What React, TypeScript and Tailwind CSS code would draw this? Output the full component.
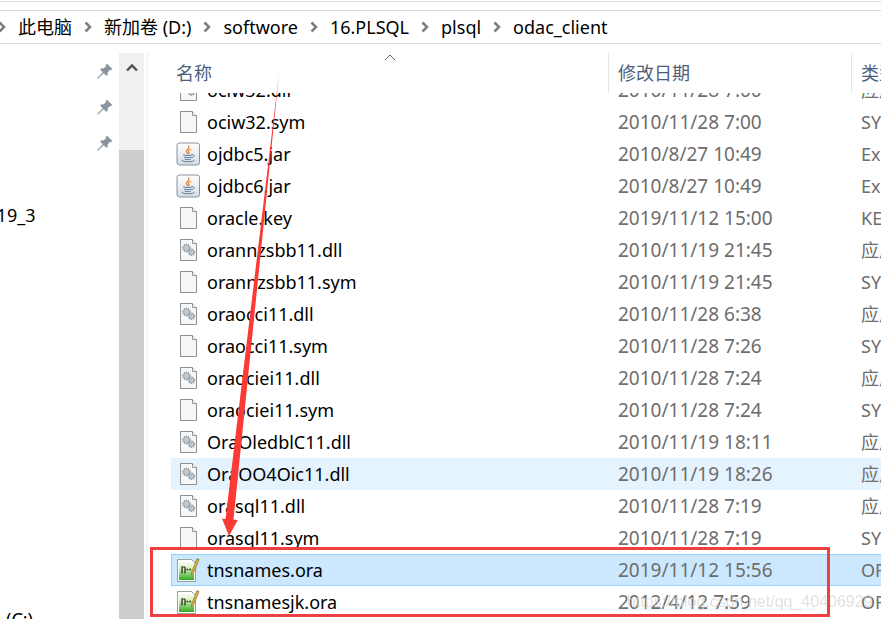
import { useLayoutEffect, useRef } from 'react';

type Kind = 'dll' | 'blank' | 'jar' | 'ora';

interface FileRow {
  name: string;
  date: string;
  type: string;
  kind: Kind;
}

const DLL = '应用程序扩展';

const files: FileRow[] = [
  { name: 'ociw32.dll', date: '2010/11/28 7:00', type: DLL, kind: 'dll' },
  { name: 'ociw32.sym', date: '2010/11/28 7:00', type: 'SYM 文件', kind: 'blank' },
  { name: 'ojdbc5.jar', date: '2010/8/27 10:49', type: 'Executable Jar File', kind: 'jar' },
  { name: 'ojdbc6.jar', date: '2010/8/27 10:49', type: 'Executable Jar File', kind: 'jar' },
  { name: 'oracle.key', date: '2019/11/12 15:00', type: 'KEY 文件', kind: 'blank' },
  { name: 'orannzsbb11.dll', date: '2010/11/19 21:45', type: DLL, kind: 'dll' },
  { name: 'orannzsbb11.sym', date: '2010/11/19 21:45', type: 'SYM 文件', kind: 'blank' },
  { name: 'oraocci11.dll', date: '2010/11/28 6:38', type: DLL, kind: 'dll' },
  { name: 'oraocci11.sym', date: '2010/11/28 7:26', type: 'SYM 文件', kind: 'blank' },
  { name: 'oraociei11.dll', date: '2010/11/28 7:24', type: DLL, kind: 'dll' },
  { name: 'oraociei11.sym', date: '2010/11/28 7:24', type: 'SYM 文件', kind: 'blank' },
  { name: 'OraOledblC11.dll', date: '2010/11/19 18:11', type: DLL, kind: 'dll' },
  { name: 'OraOO4Oic11.dll', date: '2010/11/19 18:26', type: DLL, kind: 'dll' },
  { name: 'orasql11.dll', date: '2010/11/28 7:19', type: DLL, kind: 'dll' },
  { name: 'orasql11.sym', date: '2010/11/28 7:19', type: 'SYM 文件', kind: 'blank' },
  { name: 'tnsnames.ora', date: '2019/11/12 15:56', type: 'ORA 文件', kind: 'ora' },
  { name: 'tnsnamesjk.ora', date: '2012/4/12 7:59', type: 'ORA 文件', kind: 'ora' },
];

const HOVERED = 'OraOO4Oic11.dll';
const SELECTED = 'tnsnames.ora';

function Sheet() {
  return (
    <>
      <path d="M4.5 1.5h12l4 4v17h-16z" fill="#f7f7f7" stroke="#909090" />
      <path d="M16.5 1.5v4h4" fill="#fff" stroke="#909090" />
    </>
  );
}

function FileIcon({ kind }: { kind: Kind }) {
  if (kind === 'jar') {
    return (
      <svg viewBox="0 0 24 24" className="size-6 shrink-0" aria-hidden="true">
        <defs>
          <linearGradient id="jar" x1="0" y1="0" x2="0" y2="1">
            <stop offset="0" stopColor="#ffffff" />
            <stop offset="1" stopColor="#d3dde6" />
          </linearGradient>
        </defs>
        <rect x="1" y="1" width="22.5" height="22" rx="2.5" fill="url(#jar)" stroke="#8693a0" />
        <path d="M12.800 4c1.600 2.400-3.600 3.500-2.400 5.900.3.700 1 1.300 1.300 2.100M14.600 7.200c-2.300.8-3 1.900-1.800 3 .6.700.3 1.200-.3 1.700" fill="none" stroke="#e8803a" strokeWidth="1.200" strokeLinecap="round" />
        <path d="M7.500 13c1.600.8 6.500.8 8.300 0M8.500 15.200c1.600.700 5 .700 6.500 0M9 17.200c1.600.600 4.200.600 5.500 0M16.200 12.600c2.800-.5 2.600 2.400-.3 3M6.500 18c-1.900.8.7 1.700 5.500 1.700s7-.9 5.600-1.700" fill="none" stroke="#5b7d99" strokeWidth="1" strokeLinecap="round" />
      </svg>
    );
  }
  if (kind === 'ora') {
    return (
      <svg viewBox="0 0 24 24" className="size-6 shrink-0" aria-hidden="true">
        <defs>
          <linearGradient id="ora" x1="0" y1="0" x2="0" y2="1">
            <stop offset="0" stopColor="#f6fbf1" />
            <stop offset="0.35" stopColor="#dcf0c2" />
            <stop offset="1" stopColor="#2fa91c" />
          </linearGradient>
        </defs>
        <path d="M1.500 1.500h14l4 4v18h-18z" fill="#fff" stroke="#9aa296" />
        <path d="M3 4h12l3 3v15H3z" fill="url(#ora)" />
        <path d="M6 8.500v7M9 9v6.500" stroke="#28331f" strokeWidth="1.300" />
        <path d="M6 9h3" stroke="#28331f" />
        <path d="M10.500 11.500h5" stroke="#28331f" strokeWidth="1.400" strokeDasharray="1.800 1" />
        <path d="m23 1.500-5.500 13.500-2 2.200.2-3 5.200-13.400z" fill="#e2b93e" stroke="#836923" strokeWidth="0.700" />
      </svg>
    );
  }
  return (
    <svg viewBox="0 0 24 24" className="size-6 shrink-0" aria-hidden="true">
      <Sheet />
      {kind === 'dll' && (
        <g fill="none" stroke="#84909a">
          <circle cx="10.500" cy="10" r="3.600" strokeWidth="1.400" strokeDasharray="1.400 0.860" />
          <circle cx="10.500" cy="10" r="2.600" strokeWidth="0.800" />
          <circle cx="10.500" cy="10" r="1" strokeWidth="0.800" />
          <circle cx="15.500" cy="14.300" r="3" strokeWidth="1.200" strokeDasharray="1.300 0.790" />
          <circle cx="15.500" cy="14.300" r="2.200" strokeWidth="0.800" />
          <circle cx="15.500" cy="14.300" r="0.800" strokeWidth="0.800" />
        </g>
      )}
    </svg>
  );
}

function Chevron() {
  return (
    <svg viewBox="0 0 8 12" className="h-3 w-2 shrink-0" aria-hidden="true">
      <path d="m1.500 1.500 4.500 4.500-4.500 4.500" fill="none" stroke="#808080" strokeWidth="2.600" />
    </svg>
  );
}

function Pin() {
  return (
    <svg viewBox="0 0 16 16" className="size-4" aria-hidden="true">
      <path d="m9.800.8 5.400 5.300-1.300.8-.9-.2-2.500 2.500c.3 1.500 0 2.700-.9 3.600L6.700 9.900.8 15.500l-.4-.4L6 9.200 3.200 6.400c1-.9 2.200-1.200 3.600-.9L9.300 3l-.2-1z" fill="#87939e" stroke="#87939e" strokeWidth="0.400" />
    </svg>
  );
}

const crumbs = ['此电脑', '新加卷 (D:)', 'softwore', '16.PLSQL', 'plsql', 'odac_client'];

export default function App() {
  const list = useRef<HTMLDivElement>(null);

  useLayoutEffect(() => {
    if (list.current) list.current.scrollTop = 19;
  }, []);

  return (
    <div className="relative flex h-screen flex-col overflow-hidden bg-white font-['Noto_Sans','Noto_Sans_CJK_SC',sans-serif] text-lg leading-6 text-black">
      <nav aria-label="路径" className="mt-px shrink-0 border-t border-[#d9d9d9] pt-2">
        <ol className="flex h-[34px] items-center border-y border-[#d9d9d9] whitespace-nowrap">
          {crumbs.map((c) => (
            <li key={c} className="flex items-center first:-ml-1.5">
              <span className="flex w-4 justify-center">
                <Chevron />
              </span>
              <button type="button" className="px-2">
                {c}
              </button>
            </li>
          ))}
        </ol>
      </nav>

      <div className="flex min-h-0 flex-1 pt-[9px]">
        <aside className="flex w-[119px] shrink-0 flex-col overflow-hidden">
          <div className="flex flex-col items-end gap-5 pt-2.5 pr-1.5">
            <Pin />
            <Pin />
            <Pin />
          </div>
          <div className="-ml-6 pt-[52px] whitespace-nowrap">2019_3</div>
          <div className="mt-auto -mb-3 pl-1.5">(C:)</div>
        </aside>
        <div className="flex w-[25px] shrink-0 flex-col bg-[#f0f0f0]">
          <button type="button" aria-label="向上滚动" className="flex h-[97px] items-start justify-center pt-2.5">
            <svg viewBox="0 0 12 10" className="h-2.5 w-3" aria-hidden="true">
              <path d="m1 7.500 5-5 5 5" fill="none" stroke="#505050" strokeWidth="2.400" />
            </svg>
          </button>
          <div className="flex-1 bg-[#cdcdcd]" />
        </div>
        <div className="ml-0.5 w-0.5 shrink-0 bg-[#f5f5f5]" />

        <main ref={list} className="ml-[23px] min-w-0 flex-1 overflow-hidden">
          <table className="mb-8 w-[881px] table-fixed border-separate border-spacing-0 text-left">
            <colgroup>
              <col className="w-[438px]" />
              <col className="w-[243px]" />
              <col />
            </colgroup>
            <thead className="sticky top-0 z-10 bg-white text-[#4c607a]">
              <tr className="h-10">
                <th scope="col" className="relative border-r border-[#e5e5e5] p-0 pl-[5px] font-normal">
                  <button type="button">名称</button>
                  <svg viewBox="0 0 12 7" className="absolute top-px left-1/2 h-[7px] w-3 -translate-x-1/2" aria-hidden="true">
                    <path d="m1 6 5-5 5 5" fill="none" stroke="#606060" />
                  </svg>
                </th>
                <th scope="col" className="border-r border-[#e5e5e5] p-0 pl-[9px] font-normal">
                  <button type="button">修改日期</button>
                </th>
                <th scope="col" className="p-0 pl-[9px] font-normal">
                  <button type="button">类型</button>
                </th>
              </tr>
            </thead>
            <tbody className="text-[#6d6d6d]">
              {files.map((f) => {
                const selected = f.name === SELECTED;
                const edge = selected ? 'border-y border-[#99d1ff]' : '';
                return (
                  <tr
                    key={f.name}
                    aria-selected={selected}
                    className={`h-8 ${selected ? 'bg-[#cce8ff]' : f.name === HOVERED ? 'bg-[#e5f3ff]' : ''}`}
                  >
                    <td className={`p-0 text-black ${edge} ${selected ? 'border-l pl-1' : 'pl-[5px]'}`}>
                      <div className="flex items-center gap-[7px]">
                        <FileIcon kind={f.kind} />
                        {f.name}
                      </div>
                    </td>
                    <td className={`p-0 pl-[9px] text-[19px] ${edge}`}>{f.date}</td>
                    <td className={`p-0 pl-[9px] ${edge}`}>{f.type}</td>
                  </tr>
                );
              })}
            </tbody>
          </table>
        </main>
      </div>

      <div className="pointer-events-none absolute top-[590px] left-[627px] z-20 font-['Liberation_Sans',sans-serif] text-base whitespace-nowrap text-[#d4d4d4]/70">
        https://blog.csdn.net/qq_40406929
      </div>
      <div className="pointer-events-none absolute top-[547px] left-[150px] z-20 h-[70px] w-[680px] border-3 border-[#ee3f41]" />
      <svg viewBox="0 0 70 470" className="pointer-events-none absolute top-[70px] left-[215px] z-20 h-[470px] w-[70px]" aria-hidden="true">
        <path d="M64 4 18.500 449.500l4.300.4L14 466 7 448.500l3.500.4z" fill="#fb3a36" />
      </svg>
    </div>
  );
}
